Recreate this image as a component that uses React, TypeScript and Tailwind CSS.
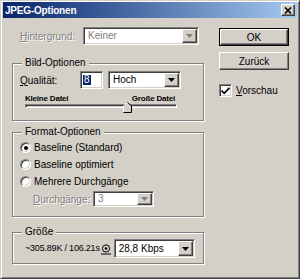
import type { ReactNode } from "react";

const sunken =
  "border border-[#808080] border-b-white border-r-white shadow-[inset_1px_1px_0_#404040,inset_-1px_-1px_0_#d4d0c8]";
const raised =
  "border border-white border-b-[#404040] border-r-[#404040] shadow-[inset_-1px_-1px_0_#808080]";

function Arrow({ disabled }: { disabled?: boolean }) {
  return (
    <div
      className={`flex h-full w-[15px] shrink-0 items-center justify-center bg-[#d4d0c8] ${raised}`}
    >
      <svg width="7" height="4" viewBox="0 0 7 4">
        <polygon points="0,0 7,0 3.5,4" fill={disabled ? "#808080" : "#000"} />
      </svg>
    </div>
  );
}

function Select({
  value,
  width,
  height,
  disabled,
}: {
  value: string;
  width: string;
  height: string;
  disabled?: boolean;
}) {
  return (
    <div className={`flex ${width} ${height} bg-white ${sunken} p-[1px]`}>
      <span
        className={`flex-1 pl-[3px] leading-none self-center ${disabled ? "text-[#808080]" : "text-black"}`}
      >
        {value}
      </span>
      <Arrow disabled={disabled} />
    </div>
  );
}

function Group({
  title,
  className,
  children,
}: {
  title: string;
  className: string;
  children: ReactNode;
}) {
  return (
    <div
      className={`relative border border-[#808080] shadow-[inset_1px_1px_0_#fff,1px_1px_0_#fff] ${className}`}
    >
      <span className="absolute -top-[7px] left-[9px] bg-[#d4d0c8] px-[3px] leading-[12px]">
        {title}
      </span>
      {children}
    </div>
  );
}

function Radio({ checked, label }: { checked?: boolean; label: string }) {
  return (
    <div className="flex h-[17px] items-center gap-[3px]">
      <div
        className={`flex h-[11px] w-[11px] items-center justify-center rounded-full bg-white ${sunken}`}
      >
        {checked && <div className="h-[4px] w-[4px] rounded-full bg-black" />}
      </div>
      <span>{label}</span>
    </div>
  );
}

export default function App() {
  return (
    <div
      className="h-[279px] w-[300px] overflow-hidden border border-[#d4d0c8] border-b-[#404040] border-r-[#404040] bg-[#d4d0c8] p-[2px] pt-[1px] text-[10px] text-black shadow-[inset_1px_1px_0_#fff,inset_-1px_-1px_0_#808080]"
      style={{ fontFamily: '"Liberation Sans", Arial, sans-serif' }}
    >
      <div className="flex h-[16px] items-center justify-between bg-gradient-to-r from-[#0a246a] to-[#a6caf0] pl-[2px] pr-[2px]">
        <span className="text-[10px] font-bold tracking-[-0.2px] text-white">
          JPEG-Optionen
        </span>
        <div className={`flex h-[12px] w-[14px] items-center justify-center bg-[#d4d0c8] ${raised}`}>
          <svg width="8" height="7" viewBox="0 0 8 7">
            <path d="M1 0.5 L7 6.5 M7 0.5 L1 6.5" stroke="#000" strokeWidth="1.6" />
          </svg>
        </div>
      </div>

      <div className="flex pt-[9px]">
        <div className="ml-[9px] w-[192px]">
          <div className="flex h-[18px] items-center pl-[8px]">
            <span className="w-[63px] text-[#808080] [text-shadow:1px_1px_0_#fff]">
              <span className="underline">H</span>intergrund:
            </span>
            <Select value="Keiner" width="w-[116px]" height="h-[18px]" disabled />
          </div>

          <Group title="Bild-Optionen" className="mt-[18px] h-[58px]">
            <div className="flex items-center pl-[7px] pt-[7px]">
              <span className="w-[60px]">
                <span className="underline">Q</span>ualität:
              </span>
              <div className={`flex h-[18px] w-[23px] items-center bg-white pl-[2px] ${sunken}`}>
                <span className="bg-[#0a246a] px-[1px] leading-[10px] text-white">8</span>
              </div>
              <div className="ml-[5px]">
                <Select value="Hoch" width="w-[73px]" height="h-[18px]" />
              </div>
            </div>
            <div className="relative ml-[12px] mt-[5px] w-[152px]">
              <div className="flex h-[10px] justify-between text-[8px] font-bold leading-[10px] tracking-[-0.2px]">
                <span>Kleine Datei</span>
                <span className="pr-[2px]">Große Datei</span>
              </div>
              <div className={`h-[4px] w-full bg-[#d4d0c8] ${sunken}`} />
              <svg
                className="absolute left-[98px] top-[8px]"
                width="9"
                height="11"
                viewBox="0 0 9 11"
              >
                <polygon points="4.5,0.5 8.5,4 8.5,10.5 0.5,10.5 0.5,4" fill="#d4d0c8" />
                <polyline points="0.5,10 0.5,4 4.5,0.5" fill="none" stroke="#fff" />
                <polyline points="4.5,0.5 8.5,4 8.5,10.5 0.5,10.5" fill="none" stroke="#000" />
              </svg>
            </div>
          </Group>

          <Group title="Format-Optionen" className="mt-[11px] h-[85px]">
            <div className="pl-[7px] pt-[6px]">
              <Radio checked label="Baseline (Standard)" />
              <Radio label="Baseline optimiert" />
              <Radio label="Mehrere Durchgänge" />
              <div className="mt-[1px] flex items-center pl-[13px]">
                <span className="w-[60px] text-[#808080] [text-shadow:1px_1px_0_#fff]">
                  <span className="underline">D</span>urchgänge:
                </span>
                <Select value="3" width="w-[61px]" height="h-[16px]" disabled />
              </div>
            </div>
          </Group>

          <Group title="Größe" className="mt-[15px] h-[32px]">
            <div className="flex items-center pl-[12px] pt-[6px]">
              <span className="text-[9px] tracking-[-0.2px]">~305.89K / 106.21s</span>
              <svg className="ml-[1px] mt-[1px]" width="10" height="11" viewBox="0 0 10 11">
                <circle cx="5" cy="4.5" r="3.6" fill="none" stroke="#000" strokeWidth="1" />
                <circle cx="5" cy="4.5" r="1.3" fill="#000" />
                <path d="M0 10 H10" stroke="#000" strokeWidth="1" />
              </svg>
              <div className="ml-[3px]">
                <Select value="28,8 Kbps" width="w-[81px]" height="h-[19px]" />
              </div>
            </div>
          </Group>
        </div>

        <div className="ml-[15px] w-[70px]">
          <div className="mt-[1px] border border-black">
            <div className={`flex h-[16px] items-center justify-center bg-[#d4d0c8] ${raised}`}>
              OK
            </div>
          </div>
          <div
            className={`mt-[6px] flex h-[18px] items-center justify-center bg-[#d4d0c8] ${raised}`}
          >
            Zurück
          </div>
          <div className="mt-[13px] flex items-center gap-[4px]">
            <div className={`flex h-[13px] w-[13px] items-center justify-center bg-white ${sunken}`}>
              <svg width="9" height="8" viewBox="0 0 9 8">
                <path d="M0.5 3.5 L3.2 6.3 L8.5 0.8" fill="none" stroke="#000" strokeWidth="1.8" />
              </svg>
            </div>
            <span>
              <span className="underline">V</span>orschau
            </span>
          </div>
        </div>
      </div>
    </div>
  );
}
